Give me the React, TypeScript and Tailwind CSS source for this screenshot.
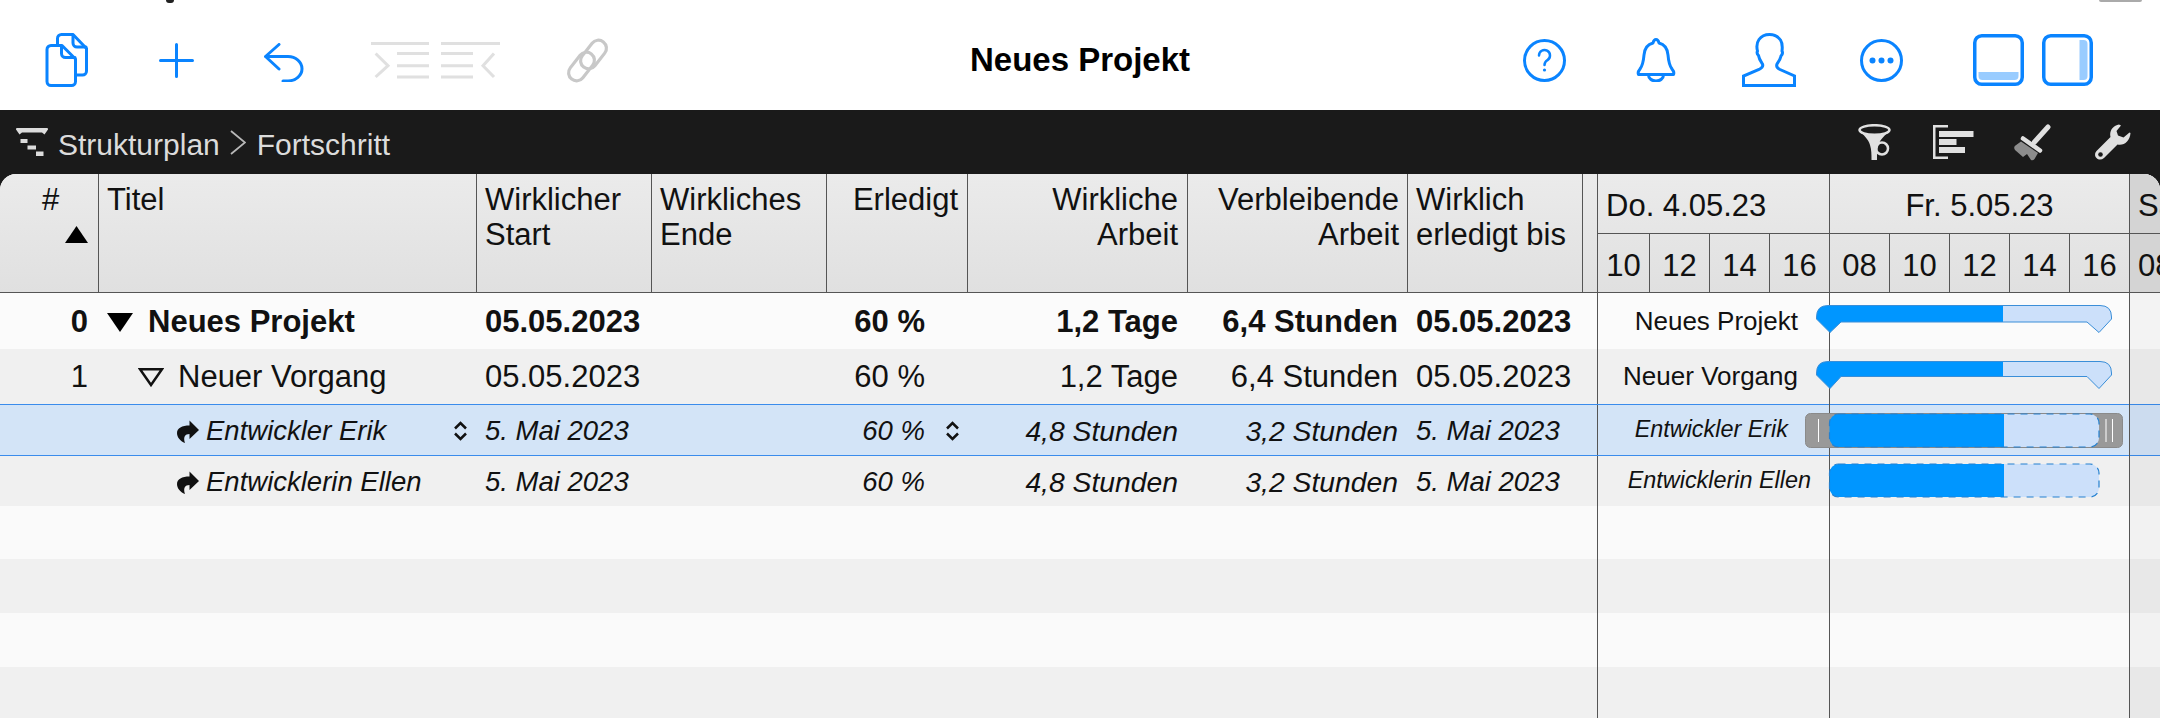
import React from 'react';

const BLUE = '#0a84ff';

const rows = [
  { id: '0', title: 'Neues Projekt', start: '05.05.2023', done: '60 %', work: '1,2 Tage', rest: '6,4 Stunden', until: '05.05.2023', kind: 'project' },
  { id: '1', title: 'Neuer Vorgang', start: '05.05.2023', done: '60 %', work: '1,2 Tage', rest: '6,4 Stunden', until: '05.05.2023', kind: 'task' },
  { id: '', title: 'Entwickler Erik', start: '5. Mai 2023', done: '60 %', work: '4,8 Stunden', rest: '3,2 Stunden', until: '5. Mai 2023', kind: 'selected' },
  { id: '', title: 'Entwicklerin Ellen', start: '5. Mai 2023', done: '60 %', work: '4,8 Stunden', rest: '3,2 Stunden', until: '5. Mai 2023', kind: 'resource' },
];

const rowClass: Record<string, string> = {
  project: 'h-[56px] bg-[#fbfbfb] font-bold text-[31px]',
  task: 'h-[55px] bg-[#f0f0f0] text-[31px]',
  selected: 'h-[52px] bg-[#d3e4f7] border-y border-[#3a8cec] italic text-[27.5px]',
  resource: 'h-[50px] bg-[#f0f0f0] italic text-[27.5px]',
};

const labelClass: Record<string, string> = {
  project: 'w-[200px] text-[26px]',
  task: 'w-[200px] text-[26px]',
  selected: 'w-[190px] text-[23.4px] italic',
  resource: 'w-[213px] text-[23.4px] italic',
};

const gridCols = 'grid grid-cols-[99px_378px_175px_175px_141px_220px_220px_175px_15px_562px]';

function Docs() {
  return (
    <svg width="43" height="54" viewBox="0 0 43 54" fill="none" stroke={BLUE} strokeWidth="3" strokeLinejoin="round" strokeLinecap="round">
      <path d="M6 12.5H17L30.5 26V48.5a4 4 0 0 1-4 4H6a4 4 0 0 1-4-4V16.5a4 4 0 0 1 4-4Z" />
      <path d="M16.5 13V20.5a4 4 0 0 0 4 4H30" />
      <path d="M12.5 11V5.5a4 4 0 0 1 4-4H28L41.5 15.5V38a4 4 0 0 1-4 4H31" />
      <path d="M28 2V10a4 4 0 0 0 4 4H41" />
    </svg>
  );
}

function Plus() {
  return (
    <svg width="35" height="35" viewBox="0 0 35 35" fill="none" stroke={BLUE} strokeWidth="3" strokeLinecap="round">
      <path d="M17.5 1.5V33.5M1.5 17.5H33.5" />
    </svg>
  );
}

function Undo() {
  return (
    <svg className="mt-[4px]" width="40" height="39" viewBox="0 0 40 39" fill="none" stroke={BLUE} strokeWidth="3" strokeLinecap="round" strokeLinejoin="round">
      <path d="M15 1.5L1.5 13.5L15 26M1.5 13.5H24a14 12.2 0 0 1 0 24.4H19" />
    </svg>
  );
}

function IndentOutdent() {
  return (
    <svg width="129" height="37" viewBox="0 0 129 37" fill="none" stroke="#e0e0e0" strokeWidth="3">
      <path d="M0 1.5H58M26 11.5H58M26 23.7H58M26 35H58M70 1.5H129M70 11.5H102M70 23.7H102M70 35H102" />
      <path d="M4.6 11.5L17 23.7L4.6 35M123 11.5L112 23.7L123 35" />
    </svg>
  );
}

function LinkIcon() {
  return (
    <svg width="45" height="45" viewBox="0 0 45 45" fill="none" stroke="#c8c8c8" strokeWidth="3.2">
      <rect x="-16" y="-8" width="32" height="16" rx="8" transform="translate(28.5 16.5) rotate(-52)" />
      <rect x="-16" y="-8" width="32" height="16" rx="8" transform="translate(16.5 28.5) rotate(-52)" />
    </svg>
  );
}

function Question() {
  return (
    <svg width="43" height="43" viewBox="0 0 43 43" fill="none" stroke={BLUE} strokeWidth="3" strokeLinecap="round">
      <circle cx="21.5" cy="21.5" r="20" />
      <path d="M16 16.5a5.5 5.5 0 1 1 8.5 4.6c-2 1.4-3 2.4-3 4.9" strokeWidth="2.5" />
      <circle cx="21.5" cy="31" r="1.6" fill={BLUE} stroke="none" />
    </svg>
  );
}

function Bell() {
  return (
    <svg width="40" height="44" viewBox="0 0 40 44" fill="none" stroke={BLUE} strokeWidth="3" strokeLinejoin="round">
      <path d="M20 1.5c1.5 0 2.5 1.5 3 3.5c6 1.500 8.500 6 9 12c.5 6 1 10 4 14c2 2.500 2 4.500 1.500 5.500H2.500c-.5-1-.5-3 1.500-5.500c3-4 3.500-8 4-14c.5-6 3-10.500 9-12c.5-2 1.500-3.500 3-3.500Z" />
      <path d="M12.500 37a7.500 6 0 0 0 15 0" />
    </svg>
  );
}

function Person() {
  return (
    <svg width="54" height="54" viewBox="0 0 54 54" fill="none" stroke={BLUE} strokeWidth="3">
      <path d="M1.500 52.500V43L17 36.500C20 35 21.500 33.500 20.500 31C18.500 28 17 26 16.500 22.500C15 21 15 19 15.500 18C14.500 14 14.500 10 17 6.500C19.500 3 23 1.500 27.500 1.500C32 1.500 36 3.500 38.500 7C40.500 10 40.500 14 40 18C41 20 40 22 39 23C38.500 26 37 28 35 31C34 33.500 35 35 38 36.500L52.500 43V52.500Z" />
    </svg>
  );
}

function More() {
  return (
    <svg width="43" height="43" viewBox="0 0 43 43" fill="none" stroke={BLUE} strokeWidth="3">
      <circle cx="21.500" cy="21.500" r="20" />
      <circle cx="12.500" cy="21.500" r="3" fill={BLUE} stroke="none" />
      <circle cx="21.500" cy="21.500" r="3" fill={BLUE} stroke="none" />
      <circle cx="30.500" cy="21.500" r="3" fill={BLUE} stroke="none" />
    </svg>
  );
}

function PanelBottom() {
  return (
    <svg width="51" height="52" viewBox="0 0 51 52" fill="none">
      <path d="M5.500 38H45.500V42a4 4 0 0 1-4 4H9.500a4 4 0 0 1-4-4Z" fill="#99ccff" />
      <rect x="1.750" y="1.750" width="47.500" height="48.500" rx="7" stroke={BLUE} strokeWidth="3.500" />
    </svg>
  );
}

function PanelRight() {
  return (
    <svg width="51" height="52" viewBox="0 0 51 52" fill="none">
      <path d="M37.500 6H41.500a4 4 0 0 1 4 4V42a4 4 0 0 1-4 4H37.500Z" fill="#99ccff" />
      <rect x="1.750" y="1.750" width="47.500" height="48.500" rx="7" stroke={BLUE} strokeWidth="3.500" />
    </svg>
  );
}

function WbsIcon() {
  return (
    <svg width="32" height="28" viewBox="0 0 32 28" fill="#dcdcdc">
      <path d="M1 0H31Q32.500 0 32 1.500L28.500 6.500L26 4.500H6L3.500 6.500L0 1.500Q-.5 0 1 0Z" />
      <rect x="4.500" y="11" width="7" height="4" />
      <rect x="11.500" y="17.500" width="8.500" height="4" />
      <rect x="20" y="23.500" width="7.500" height="4.500" />
    </svg>
  );
}

function Funnel() {
  return (
    <svg width="33" height="37" viewBox="0 0 33 37" fill="none" stroke="#e0e0e0" strokeWidth="2.500">
      <ellipse cx="16.500" cy="6" rx="15" ry="4.800" />
      <circle cx="24" cy="24.500" r="6" />
      <path d="M2 7C5 11 10.500 15 12 21C13.500 26 13.500 30 13.500 36H19C19 30 19 26 20.500 21C22 15 28 11 31 7C26 12 7 12 2 7Z" fill="#e0e0e0" stroke="none" />
    </svg>
  );
}

function GanttIcon() {
  return (
    <svg width="41" height="34" viewBox="0 0 41 34" fill="#e0e0e0">
      <path d="M15 1.250H1.250V32.750H15" fill="none" stroke="#e0e0e0" strokeWidth="2.500" />
      <rect x="6" y="6" width="34.500" height="6" />
      <rect x="6" y="14" width="17.500" height="6" />
      <rect x="6" y="22" width="26" height="6" />
    </svg>
  );
}

function Brush() {
  return (
    <svg width="37" height="37" viewBox="0 0 37 37" fill="none">
      <path d="M34 3L20.500 18" stroke="#e0e0e0" strokeWidth="5" strokeLinecap="round" />
      <path d="M9 14.500L26 26.500" stroke="#e0e0e0" strokeWidth="4.500" strokeLinecap="round" />
      <path d="M7 17.500L.8 22Q-.5 24 1 26L9 33L13 30L17 36Q19 37 20.500 35L24 29Z" fill="#8c8c8c" />
    </svg>
  );
}

function Wrench() {
  return (
    <svg width="36" height="36" viewBox="0 0 36 36" fill="#e0e0e0">
      <path d="M24 .5C18 1.500 14 7 15.500 13L2 26.500C-.5 29-.5 32 1.500 34C3.500 36 6.500 36 9 34L22.500 20.500C29 22 35 17 35.500 9L34.500 8.500L28.500 13.500L23 11.500L21.500 7L26 1.500Z" />
      <circle cx="5.500" cy="30.500" r="2.300" fill="#1a1a1a" />
    </svg>
  );
}

function ResourceArrow() {
  return (
    <svg width="22" height="23" viewBox="0 0 22 23" fill="#111">
      <path d="M12.500.5L22 10L12.500 19V14C8 14 6 17 8 23C3 21 0 17 0 13C0 8 5 5.500 12.500 5.500Z" />
    </svg>
  );
}

function Stepper() {
  return (
    <svg width="15" height="20" viewBox="0 0 15 20" fill="none" stroke="#111" strokeWidth="2.500">
      <path d="M2 7.500L7.500 2L13 7.500M2 12.500L7.500 18L13 12.500" />
    </svg>
  );
}

// summary bar with the two tips hanging under it
function SummaryBar({ bodyH, id }: { bodyH: number; id: string }) {
  const d = `M12 .5H284Q295.500 .5 295.500 12V14L283 27.500L271 ${bodyH}H25L14 27.500L.5 14V12Q.5 .5 12 .5Z`;
  return (
    <svg className="absolute left-[218px] z-10 top-[12px]" width="296" height="29" viewBox="0 0 296 29">
      <defs>
        <linearGradient id={id} gradientUnits="userSpaceOnUse" x1="0" x2="296" y1="0" y2="0">
          <stop offset="0.632" stopColor="#0096ff" />
          <stop offset="0.632" stopColor="#cce0fa" />
        </linearGradient>
      </defs>
      <path d={d} fill={`url(#${id})`} stroke="#3a8ed8" strokeWidth="1" />
    </svg>
  );
}

function ResourceBar({ handles, id, top }: { handles: boolean; id: string; top: string }) {
  return (
    <svg className={`absolute left-[207px] z-10 ${top}`} width="318" height="36" viewBox="0 0 318 36">
      {handles && (
        <g>
          <rect x=".5" y=".5" width="317" height="34" rx="5" fill="#999" stroke="#8a8a8a" />
          <path d="M13.500 6V29M301 6V29M307.500 6V29" stroke="#fff" strokeWidth="1" />
        </g>
      )}
      <defs>
        <linearGradient id={id} gradientUnits="userSpaceOnUse" x1="24" x2="294" y1="0" y2="0">
          <stop offset="0.648" stopColor="#0096ff" />
          <stop offset="0.648" stopColor="#cce0fa" />
        </linearGradient>
      </defs>
      <rect x="24.500" y="1" width="269.500" height="33" rx="9" fill={`url(#${id})`} stroke="#2480d0" strokeWidth="1.200" strokeDasharray="7 6" />
    </svg>
  );
}

function Row({ row }: { row: (typeof rows)[number] }) {
  const sel = row.kind === 'selected';
  const sub = sel || row.kind === 'resource';
  const workSize = sub ? 'text-[28.3px]' : '';
  return (
    <div className={`${gridCols} items-stretch text-[#111] ${rowClass[row.kind]}`}>
      <div className="flex items-center justify-end pr-[11px] pt-[2px]">{row.id}</div>
      <div className={`flex items-center ${row.kind === 'project' ? 'pl-[8px]' : row.kind === 'task' ? 'pl-[39px]' : 'pl-[78px]'} pr-[9px] pt-[2px]`}>
        {row.kind === 'project' && (
          <svg className="mr-[15px]" width="26" height="19" viewBox="0 0 26 19"><path d="M0 0H26L13 19Z" fill="#000" /></svg>
        )}
        {row.kind === 'task' && (
          <svg className="mr-[14px]" width="26" height="19" viewBox="0 0 26 19" fill="none" stroke="#111" strokeWidth="2.500"><path d="M2 1.250H24L13 17Z" /></svg>
        )}
        {sub && <span className="mr-[7px] flex"><ResourceArrow /></span>}
        <span className="whitespace-nowrap">{row.title}</span>
        {sel && <span className="ml-auto flex"><Stepper /></span>}
      </div>
      <div className="flex items-center pl-[8px] pt-[2px] whitespace-nowrap">{row.start}</div>
      <div />
      <div className="flex items-center justify-end pr-[8px] pt-[2px] whitespace-nowrap">
        <span className="mr-[20px]">{row.done}</span>
        <span className="flex w-[15px]">{sel && <Stepper />}</span>
      </div>
      <div className={`flex items-center justify-end pr-[10px] pt-[2px] whitespace-nowrap ${workSize}`}>{row.work}</div>
      <div className={`flex items-center justify-end pr-[10px] pt-[2px] whitespace-nowrap ${workSize}`}>{row.rest}</div>
      <div className="flex items-center pl-[8px] pt-[2px] whitespace-nowrap">{row.until}</div>
      <div className="border-r border-[#555]" />
      <div className="relative flex items-center font-normal not-italic">
        <span className={`text-right whitespace-nowrap ${labelClass[row.kind]}`}>{row.title}</span>
        {row.kind === 'project' && <SummaryBar bodyH={17} id="sum0" />}
        {row.kind === 'task' && <SummaryBar bodyH={15.5} id="sum1" />}
        {row.kind === 'selected' && <ResourceBar handles id="res0" top="top-[8px]" />}
        {row.kind === 'resource' && <ResourceBar handles={false} id="res1" top="top-[7px]" />}
      </div>
    </div>
  );
}

function HeaderCell({ children, right, className = '' }: { children?: React.ReactNode; right?: boolean; className?: string }) {
  return (
    <div className={`border-r border-[#555] pl-[8px] pt-[8px] leading-[35px] ${right ? 'pr-[9px] text-right' : 'pr-[4px]'} ${className}`}>{children}</div>
  );
}

const hours = ['10', '12', '14', '16', '08', '10', '12', '14', '16', '08'];

export default function App() {
  return (
    <div className="relative h-[718px] overflow-hidden bg-white font-['Liberation_Sans',Arial,sans-serif]">
      {/* cut off bits at the very top of the capture */}
      <span className="absolute left-[166px] top-0 h-[3px] w-[8px] rounded-b-full bg-[#222]" />
      <span className="absolute left-[2099px] top-0 h-[2px] w-[43px] rounded-b bg-[#aaa]" />

      <header className="grid h-[110px] grid-cols-[1fr_auto_1fr] items-center bg-white pt-[10px]">
        <div className="flex items-center pl-[45px]">
          <Docs />
          <span className="ml-[71px] flex"><Plus /></span>
          <span className="ml-[70px] flex"><Undo /></span>
          <span className="ml-[67px] flex"><IndentOutdent /></span>
          <span className="ml-[65px] flex"><LinkIcon /></span>
        </div>
        <h1 className="text-[33px] font-bold text-black">Neues Projekt</h1>
        <div className="flex items-center justify-end pr-[67px]">
          <Question />
          <span className="ml-[70px] flex"><Bell /></span>
          <span className="ml-[66px] flex"><Person /></span>
          <span className="ml-[64px] flex"><More /></span>
          <span className="ml-[70px] flex"><PanelBottom /></span>
          <span className="ml-[18px] flex"><PanelRight /></span>
        </div>
      </header>

      <div className="flex h-[64px] items-center justify-between bg-[#1a1a1a] pl-[16px] pr-[29px] text-[30px] text-[#dcdcdc]">
        <div className="flex items-center">
          <WbsIcon />
          <span className="ml-[10px] pt-[4px]">Strukturplan</span>
          <svg className="ml-[10px]" width="16" height="25" viewBox="0 0 16 25" fill="none" stroke="#b8b8b8" strokeWidth="1.800"><path d="M1 1L15 12.500L1 24" /></svg>
          <span className="ml-[11px] pt-[4px]">Fortschritt</span>
        </div>
        <div className="flex items-center">
          <Funnel />
          <span className="ml-[42px] flex"><GanttIcon /></span>
          <span className="ml-[40px] flex"><Brush /></span>
          <span className="ml-[44px] flex"><Wrench /></span>
        </div>
      </div>

      <div className="absolute inset-x-0 top-[174px] bottom-0 bg-[#1a1a1a]">
        <div className="h-full overflow-hidden rounded-t-[16px] bg-[#fbfbfb]">
          <div className={`${gridCols} h-[119px] border-b border-[#555] bg-gradient-to-b from-[#ebebeb] to-[#e0e0e0] text-[31px] text-[#111]`}>
            <div className="border-r border-[#555] pt-[8px] text-center leading-[35px]">
              <div className="pl-[3px]">#</div>
              <div className="flex justify-end pr-[10px] pt-[9px]">
                <svg width="23" height="17" viewBox="0 0 23 17"><path d="M11.500 0L23 17H0Z" fill="#000" /></svg>
              </div>
            </div>
            <HeaderCell>Titel</HeaderCell>
            <HeaderCell>Wirklicher<br />Start</HeaderCell>
            <HeaderCell>Wirkliches<br />Ende</HeaderCell>
            <HeaderCell right>Erledigt</HeaderCell>
            <HeaderCell right>Wirkliche<br />Arbeit</HeaderCell>
            <HeaderCell right className="!pr-[8px]">Verbleibende<br />Arbeit</HeaderCell>
            <HeaderCell className="whitespace-nowrap">Wirklich<br />erledigt bis</HeaderCell>
            <div className="border-r border-[#555]" />
            <div className="flex flex-col overflow-hidden">
              <div className="grid h-[60px] grid-cols-[232px_300px_30px] items-stretch border-b border-[#555] pt-0">
                <div className="flex items-center border-r border-[#555] pl-[8px] pt-[5px]">Do. 4.05.23</div>
                <div className="flex items-center justify-center border-r border-[#555] pt-[5px]">Fr. 5.05.23</div>
                <div className="flex items-center overflow-hidden bg-[#d4d4d4] pl-[8px] pt-[5px]">Sa.</div>
              </div>
              <div className="grid h-[58px] grid-cols-[52px_60px_60px_60px_60px_60px_60px_60px_60px_30px] items-stretch">
                {hours.map((h, i) => (
                  <div
                    key={i}
                    className={i === 9 ? 'flex items-center overflow-hidden bg-[#d4d4d4] pl-[8px] pt-[6px]' : 'flex items-center justify-center border-r border-[#555] pt-[6px]'}
                  >
                    {h}
                  </div>
                ))}
              </div>
            </div>
          </div>

          <div className="relative">
            {rows.map(r => (
              <Row key={r.title} row={r} />
            ))}
            <div className={`${gridCols} h-[53px] bg-[#fafafa]`}><div className="col-start-9 border-r border-[#555]" /></div>
            <div className={`${gridCols} h-[54px] bg-[#f0f0f0]`}><div className="col-start-9 border-r border-[#555]" /></div>
            <div className={`${gridCols} h-[54px] bg-[#fafafa]`}><div className="col-start-9 border-r border-[#555]" /></div>
            <div className={`${gridCols} h-[51px] bg-[#f0f0f0]`}><div className="col-start-9 border-r border-[#555]" /></div>
            {/* day boundaries and the weekend shade over the chart */}
            <div className="absolute inset-y-0 left-[1829px] w-px bg-[#555]" />
            <div className="absolute inset-y-0 left-[2129px] right-0 border-l border-[#555] bg-black/[0.03]" />
          </div>
        </div>
      </div>
    </div>
  );
}
